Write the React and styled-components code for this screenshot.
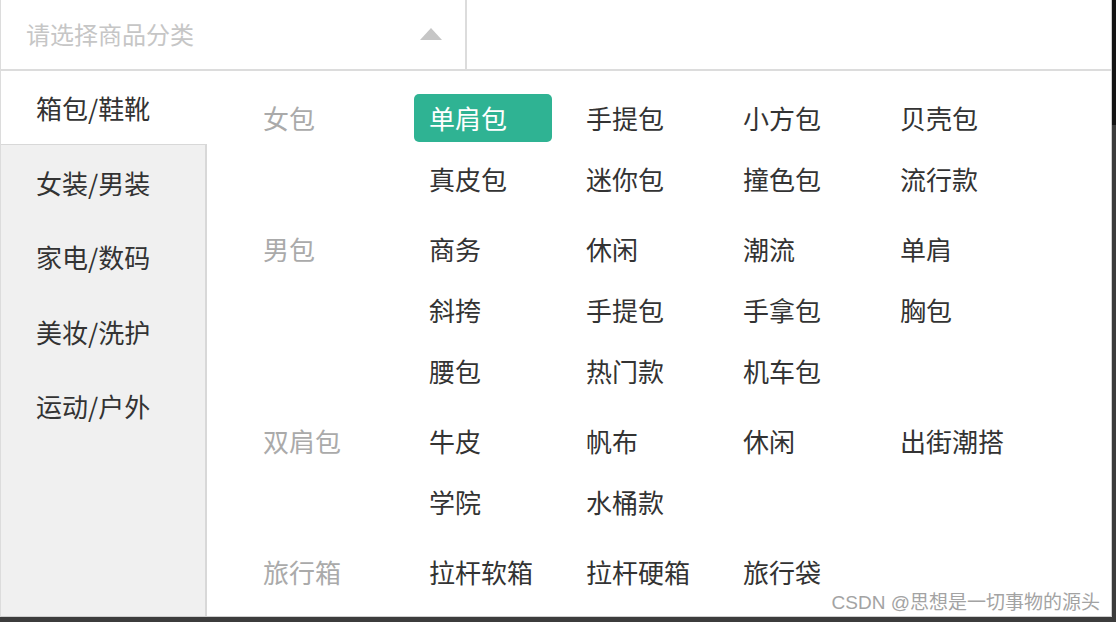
import React from 'react';
import styled, { createGlobalStyle } from 'styled-components';

const GlobalStyle = createGlobalStyle`
  html, body {
    margin: 0;
    padding: 0;
  }
  body {
    width: 1116px;
    height: 622px;
    overflow: hidden;
    background: linear-gradient(to bottom, #141414 0, #141414 125px, #3c3c3c 125px);
    font-family: "Noto Sans CJK SC", "Noto Sans", sans-serif;
  }
  * {
    box-sizing: border-box;
  }
`;

const categories = [
  {
    name: '女包',
    items: ['单肩包', '手提包', '小方包', '贝壳包', '真皮包', '迷你包', '撞色包', '流行款'],
  },
  {
    name: '男包',
    items: ['商务', '休闲', '潮流', '单肩', '斜挎', '手提包', '手拿包', '胸包', '腰包', '热门款', '机车包'],
  },
  {
    name: '双肩包',
    items: ['牛皮', '帆布', '休闲', '出街潮搭', '学院', '水桶款'],
  },
  {
    name: '旅行箱',
    items: ['拉杆软箱', '拉杆硬箱', '旅行袋'],
  },
];

const navList = ['箱包/鞋靴', '女装/男装', '家电/数码', '美妆/洗护', '运动/户外'];

export default function App() {
  return (
    <>
      <GlobalStyle />
      <Frame>
        <Header>
          <SelectBox>
            <Placeholder>请选择商品分类</Placeholder>
            <Caret />
          </SelectBox>
        </Header>
        <Body>
          <Nav>
            {navList.map((n, i) => (
              <NavItem key={n} $active={i === 0}>{n}</NavItem>
            ))}
          </Nav>
          <Content>
            {categories.map(group => (
              <Group key={group.name}>
                <GroupLabel>{group.name}</GroupLabel>
                <ItemGrid>
                  {group.items.map((item, i) => (
                    <Item key={item + i} $active={group.name === '女包' && i === 0}>{item}</Item>
                  ))}
                </ItemGrid>
              </Group>
            ))}
          </Content>
        </Body>
        <Watermark>CSDN @思想是一切事物的源头</Watermark>
      </Frame>
    </>
  );
}

const Frame = styled.div`
  position: relative;
  width: 1112px;
  height: 617px;
  background: #fff;
  border-left: 1px solid #dcdcdc;
  border-right: 1px solid #cfcfcf;
  border-bottom: 1px solid #cfcfcf;
  display: flex;
  flex-direction: column;
`;

const Header = styled.div`
  height: 71px;
  flex-shrink: 0;
  display: flex;
  border-bottom: 2px solid #dcdcdc;
`;

const SelectBox = styled.div`
  width: 466px;
  height: 100%;
  border-right: 2px solid #dcdcdc;
  display: flex;
  align-items: center;
  justify-content: space-between;
  padding: 0 23px 0 25px;
`;

const Placeholder = styled.span`
  font-size: 24px;
  color: #c6c6c6;
  line-height: 1;
  margin-top: -2px;
`;

const Caret = styled.span`
  width: 0;
  height: 0;
  border-left: 11px solid transparent;
  border-right: 11px solid transparent;
  border-bottom: 12px solid #c6c6c6;
  margin-top: -1px;
`;

const Body = styled.div`
  flex: 1;
  display: flex;
  min-height: 0;
`;

const Nav = styled.div`
  width: 206px;
  flex-shrink: 0;
  background: #f0f0f0;
  border-right: 2px solid #d8d8d8;
  display: flex;
  flex-direction: column;
`;

const NavItem = styled.div`
  height: ${p => (p.$active ? '74px' : '74.5px')};
  padding-left: 35px;
  display: flex;
  align-items: center;
  font-size: 26px;
  color: #333;
  background: ${p => (p.$active ? '#fff' : 'transparent')};
  margin-right: ${p => (p.$active ? '-2px' : '0')};
  border-bottom: ${p => (p.$active ? '1px solid #d8d8d8' : 'none')};
`;

const Content = styled.div`
  flex: 1;
  padding: 16px 0 0 56px;
`;

const Group = styled.div`
  display: flex;
  margin-bottom: 9px;
`;

const GroupLabel = styled.div`
  width: 151px;
  flex-shrink: 0;
  height: 61px;
  line-height: 61px;
  font-size: 26px;
  color: #aaa;
`;

const ItemGrid = styled.div`
  display: grid;
  grid-template-columns: repeat(4, 157px);
  grid-auto-rows: 61px;
  align-items: center;
`;

const Item = styled.span`
  justify-self: start;
  min-width: 138px;
  height: 48px;
  line-height: 48px;
  padding: 0 15px;
  border-radius: 5px;
  font-size: 26px;
  color: ${p => (p.$active ? '#fff' : '#333')};
  background: ${p => (p.$active ? '#2fb393' : 'transparent')};
  cursor: pointer;
`;

const Watermark = styled.div`
  position: absolute;
  right: 11px;
  bottom: 2px;
  font-family: "Liberation Sans", "Noto Sans CJK SC", sans-serif;
  font-size: 19px;
  color: #a3a3a3;
  pointer-events: none;
`;
